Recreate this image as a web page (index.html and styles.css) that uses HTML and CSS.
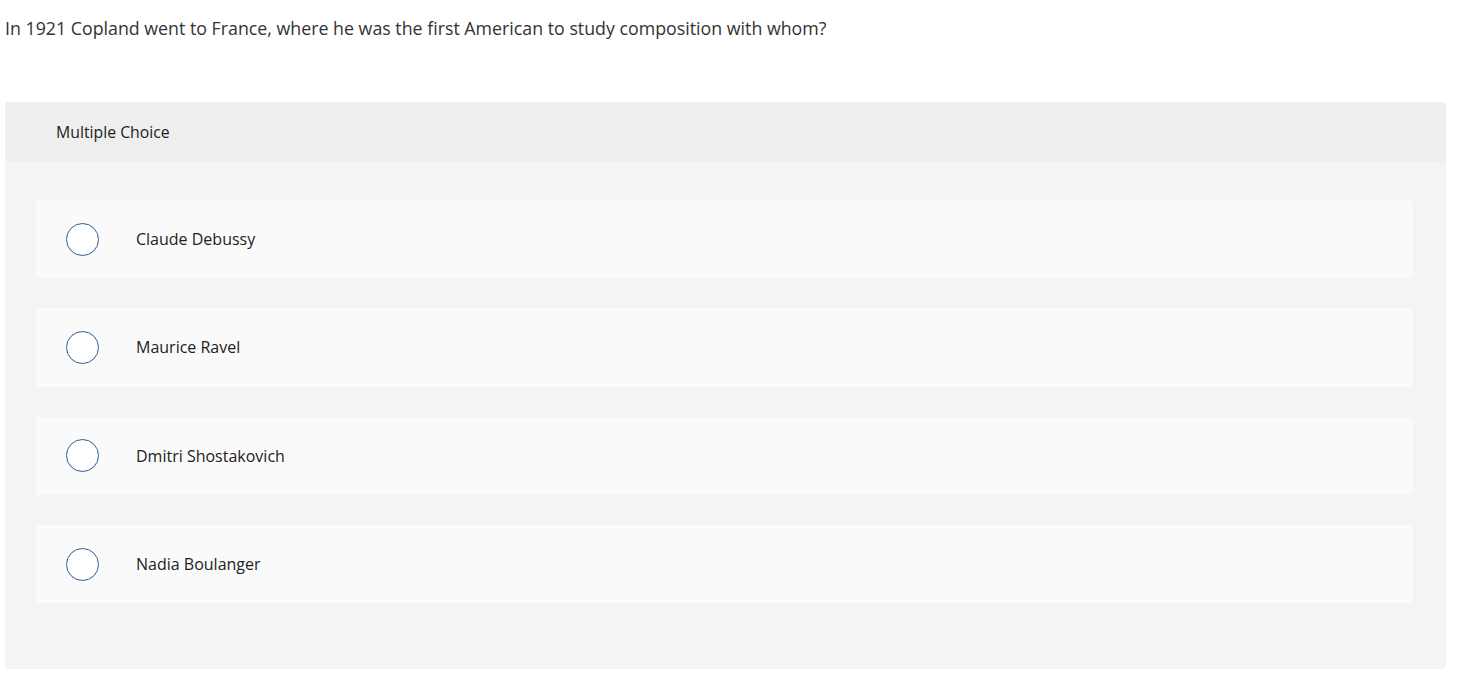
FILE: index.html
```html
<!DOCTYPE html>
<html>
<head>
<meta charset="utf-8">
<link rel="stylesheet" href="styles.css">
</head>
<body>
<p class="question">In 1921 Copland went to France, where he was the first American to study composition with whom?</p>
<section class="card">
  <div class="card-header">Multiple Choice</div>
  <div class="card-body">
    <label class="option"><span class="radio"></span><span class="label">Claude Debussy</span></label>
    <label class="option"><span class="radio"></span><span class="label">Maurice Ravel</span></label>
    <label class="option"><span class="radio"></span><span class="label">Dmitri Shostakovich</span></label>
    <label class="option"><span class="radio"></span><span class="label">Nadia Boulanger</span></label>
  </div>
</section>
</body>
</html>
```
FILE: styles.css
```css
html, body {
  margin: 0;
  padding: 0;
  background: #ffffff;
}
body {
  font-family: "Open Sans", sans-serif;
  color: #333333;
  padding: 0 24px 0 5px;
}
.question {
  margin: 0;
  padding-top: 16px;
  font-size: 17.8px;
  line-height: 24px;
  color: #333333;
}
.card {
  margin-top: 62px;
  width: 1441px;
  border-radius: 4px;
  background: #f4f4f4;
  overflow: hidden;
}
.card-header {
  height: 60px;
  background: #efefef;
  display: flex;
  align-items: center;
  padding-left: 51px;
  font-size: 15.8px;
  color: #222222;
}
.card-body {
  padding: 38px 33px 66px 31px;
  display: flex;
  flex-direction: column;
  gap: 30px;
}
.option {
  height: 78.33px;
  background: #fafafa;
  border-radius: 4px;
  display: flex;
  align-items: center;
  padding-left: 30px;
}
.radio {
  width: 31px;
  height: 31px;
  border: 1.5px solid #2b5d91;
  border-radius: 50%;
  background: #ffffff;
  flex: none;
}
.label {
  margin-left: 37px;
  font-size: 16px;
  color: #222222;
}
```
